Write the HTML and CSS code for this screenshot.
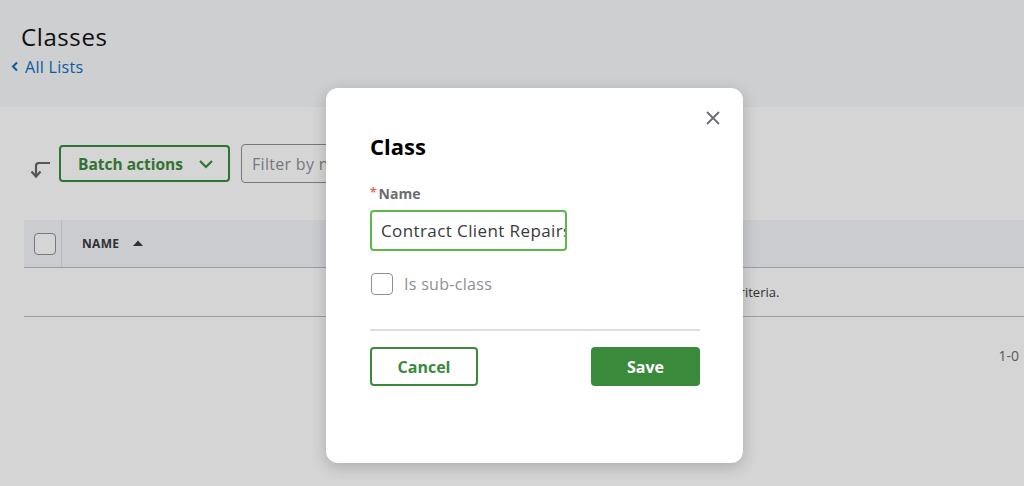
FILE: index.html
```html
<!DOCTYPE html>
<html>
<head>
<meta charset="utf-8">
<link rel="stylesheet" href="styles.css">
</head>
<body>
<header class="page-header">
  <h1 class="page-title">Classes</h1>
  <a class="back-link" href="#"><svg class="back-chev" width="8" height="11" viewBox="0 0 8 11"><path d="M6 1.5 L2 5.5 L6 9.5" fill="none" stroke="#0a6fc2" stroke-width="2"/></svg>All Lists</a>
</header>
<main class="content">
  <div class="toolbar">
    <svg class="corner-icon" width="24" height="22" viewBox="0 0 24 22"><path d="M21 5 H10 Q7 5 7 8 V18" fill="none" stroke="#666" stroke-width="2.2"/><path d="M2.5 13.5 L7 18.5 L11.5 13.5" fill="none" stroke="#666" stroke-width="2.2"/></svg>
    <button class="btn-outline batch">Batch actions <svg width="16" height="10" viewBox="0 0 16 10"><path d="M2 2 L8 8 L14 2" fill="none" stroke="#3b8a3c" stroke-width="2.2"/></svg></button>
    <div class="filter">Filter by name</div>
  </div>
  <div class="table">
    <div class="thead">
      <div class="cell-check"><span class="checkbox"></span></div>
      <div class="cell-name">NAME <svg class="sort" width="10" height="6" viewBox="0 0 10 6"><path d="M0 6 L5 0.5 L10 6 Z" fill="#393a3d"/></svg></div>
    </div>
    <div class="trow">There are no classes that match the criteria.</div>
  </div>
  <div class="pager">1-0</div>
</main>
<div class="overlay"></div>
<div class="modal">
  <button class="close" aria-label="Close"><svg width="14" height="14" viewBox="0 0 14 14"><path d="M1 1 L13 13 M13 1 L1 13" stroke="#6b6c72" stroke-width="1.8"/></svg></button>
  <h2 class="modal-title">Class</h2>
  <label class="field-label"><span class="req">*</span>Name</label>
  <div class="text-input">Contract Client Repairs</div>
  <label class="check-row"><span class="checkbox"></span><span class="check-text">Is sub-class</span></label>
  <div class="divider"></div>
  <div class="actions">
    <button class="btn-outline cancel">Cancel</button>
    <button class="btn-primary">Save</button>
  </div>
</div>
</body>
</html>
```

FILE: styles.css
```css
* { box-sizing: border-box; }
html, body { margin: 0; padding: 0; }
body {
  width: 1024px;
  height: 486px;
  overflow: hidden;
  background: #fff;
  font-family: "Open Sans", "Noto Sans", "Liberation Sans", sans-serif;
  color: #393a3d;
  position: relative;
}
.page-header {
  height: 107px;
  background: #f7f8f9;
  padding: 21px 0 0 21px;
}
.page-title {
  margin: 0;
  font-size: 24px;
  font-weight: 400;
  line-height: 32px;
  color: #111;
  letter-spacing: 0.6px;
}
.back-link {
  display: inline-flex;
  align-items: center;
  margin-left: -10px;
  font-size: 16px;
  line-height: 22px;
  color: #0a6fc2;
  text-decoration: none;
  margin-top: 3px;
  letter-spacing: 0.3px;
}
.back-chev { margin-right: 6px; margin-top: -2px; }
.content { padding: 37px 0 0 24px; }
.toolbar { display: flex; align-items: center; height: 39px; }
.corner-icon { margin: 10px 0 0 5px; }
.btn-outline {
  font-family: inherit;
  font-weight: 700;
  font-size: 16px;
  color: #3b8a3c;
  background: #fff;
  border: 2px solid #3b8a3c;
  border-radius: 4px;
  cursor: pointer;
}
.batch {
  margin-left: 6px;
  width: 171px;
  height: 37px;
  display: flex;
  align-items: center;
  justify-content: space-between;
  padding: 0 14px 0 17px;
  font-size: 15.5px;
}
.filter {
  margin-left: 11px;
  width: 220px;
  height: 39px;
  border: 1px solid #8d9096;
  border-radius: 4px;
  display: flex;
  align-items: center;
  padding-left: 10px;
  font-size: 16px;
  color: #8d9096;
  letter-spacing: 0.3px;
}
.table { margin-top: 37px; }
.thead {
  display: flex;
  height: 48px;
  background: #f4f5f8;
  border-bottom: 1px solid #babec5;
}
.cell-check {
  width: 38px;
  display: flex;
  align-items: center;
  justify-content: center;
  border-right: 1px solid #dcdee3;
  padding-left: 4px;
}
.checkbox {
  display: inline-block;
  flex: none;
  width: 22px;
  height: 22px;
  border: 1px solid #8d9096;
  border-radius: 4px;
  background: #fff;
}
.cell-name {
  display: flex;
  align-items: center;
  padding-left: 20px;
  font-size: 12px;
  font-weight: 700;
  color: #393a3d;
  letter-spacing: 0.3px;
}
.sort { margin-left: 14px; margin-top: -1px; }
.trow {
  height: 49px;
  border-bottom: 1px solid #babec5;
  display: flex;
  align-items: center;
  padding-left: 490px;
  font-size: 13px;
  color: #393a3d;
  white-space: nowrap;
}
.pager {
  text-align: right;
  padding-top: 29px;
  padding-right: 5px;
  font-size: 14px;
  color: #6b6c72;
  white-space: nowrap;
}
.overlay {
  position: absolute;
  inset: 0;
  background: rgba(0, 0, 0, 0.165);
}
.modal {
  position: absolute;
  left: 326px;
  top: 88px;
  width: 417px;
  height: 375px;
  background: #fff;
  border-radius: 12px;
  box-shadow: 0 4px 16px rgba(0, 0, 0, 0.2);
  padding: 41px 44px 0 44px;
}
.close {
  position: absolute;
  top: 23px;
  right: 23px;
  background: none;
  border: none;
  padding: 0;
  width: 14px;
  height: 14px;
  cursor: pointer;
}
.modal-title {
  margin: 0;
  font-size: 22px;
  font-weight: 700;
  line-height: 34px;
  color: #000;
}
.field-label {
  display: block;
  margin-top: 20px;
  font-size: 14px;
  font-weight: 700;
  color: #6b6c72;
  line-height: 20px;
}
.req { color: #e0695b; font-size: 12px; margin-right: 2px; vertical-align: 2px; }
.text-input {
  margin-top: 6px;
  width: 197px;
  height: 41px;
  border: 2px solid #5cb84a;
  border-radius: 4px;
  padding: 0 0 0 9px;
  font-size: 17px;
  letter-spacing: 0.4px;
  line-height: 37px;
  color: #393a3d;
  white-space: nowrap;
  overflow: hidden;
}
.check-row {
  display: flex;
  align-items: center;
  margin-top: 22px;
  margin-left: 1px;
}
.check-text { margin-left: 11px; font-size: 16px; color: #8d9096; letter-spacing: 0.3px; }
.divider {
  margin-top: 34px;
  height: 2px;
  background: #dcdee3;
  width: 330px;
}
.actions {
  display: flex;
  justify-content: space-between;
  width: 330px;
  margin-top: 16px;
}
.cancel { width: 108px; height: 39px; }
.btn-primary {
  width: 109px;
  height: 39px;
  background: #3b8a3c;
  color: #fff;
  border: none;
  border-radius: 4px;
  font-family: inherit;
  font-weight: 700;
  font-size: 16px;
  cursor: pointer;
}
```
